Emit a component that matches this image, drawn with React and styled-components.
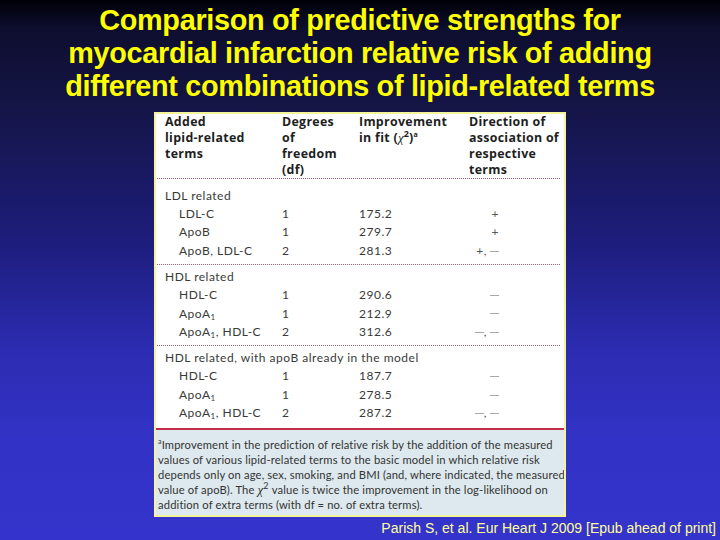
import styled, { createGlobalStyle } from 'styled-components';

const GlobalStyle = createGlobalStyle`
  html, body {
    margin: 0;
    padding: 0;
  }
  body {
    width: 720px;
    height: 540px;
    overflow: hidden;
    background: linear-gradient(
      to bottom,
      #000008 0px,
      #0e0e30 30px,
      #141444 100px,
      #1e1e80 250px,
      #2c2cb2 350px,
      #3232c6 440px,
      #3434cc 540px
    );
  }
`;

const groups = [
  {
    label: 'LDL related',
    rows: [
      ['LDL-C', '1', '175.2', '+'],
      ['ApoB', '1', '279.7', '+'],
      ['ApoB, LDL-C', '2', '281.3', '+,-'],
    ],
  },
  {
    label: 'HDL related',
    rows: [
      ['HDL-C', '1', '290.6', '-'],
      [['ApoA', '1'], '1', '212.9', '-'],
      [['ApoA', '1', ', HDL-C'], '2', '312.6', '-,-'],
    ],
  },
  {
    label: 'HDL related, with apoB already in the model',
    rows: [
      ['HDL-C', '1', '187.7', '-'],
      [['ApoA', '1'], '1', '278.5', '-'],
      [['ApoA', '1', ', HDL-C'], '2', '287.2', '-,-'],
    ],
  },
];

function Term({ value }) {
  if (typeof value === 'string') return value;
  return (
    <>
      {value[0]}
      <Sub>{value[1]}</Sub>
      {value[2]}
    </>
  );
}

// '+' plus sign, '-' minus dash, ',' separator
function Direction({ value }) {
  return value.split('').map((ch, i) => {
    if (ch === '-') return <Dash key={i} />;
    if (ch === ',') return <Comma key={i}>,</Comma>;
    return <Plus key={i}>+</Plus>;
  });
}

export default function App() {
  return (
    <>
      <GlobalStyle />
      <Page>
        <Title>
          Comparison of predictive strengths for
          <br />
          myocardial infarction relative risk of adding
          <br />
          different combinations of lipid-related terms
        </Title>

        <Panel>
          <Header>
            <HeadCell>
              Added
              <br />
              lipid-related
              <br />
              terms
            </HeadCell>
            <HeadCell>
              Degrees
              <br />
              of
              <br />
              freedom
              <br />
              (df)
            </HeadCell>
            <HeadCell>
              Improvement
              <br />
              in fit (<Chi>χ</Chi>
              <Sup2>2</Sup2>)<Sup>a</Sup>
            </HeadCell>
            <HeadCell>
              Direction of
              <br />
              association of
              <br />
              respective
              <br />
              terms
            </HeadCell>
          </Header>

          {groups.map((group, gi) => (
            <Group key={group.label} last={gi === groups.length - 1} first={gi === 0}>
              <SectionLabel>{group.label}</SectionLabel>
              {group.rows.map((row, ri) => (
                <Row key={ri}>
                  <TermCell>
                    <Term value={row[0]} />
                  </TermCell>
                  <Cell>{row[1]}</Cell>
                  <Cell>{row[2]}</Cell>
                  <DirCell>
                    <Direction value={row[3]} />
                  </DirCell>
                </Row>
              ))}
            </Group>
          ))}

          <Footnote>
            <Sup>a</Sup>Improvement in the prediction of relative risk by the addition of the measured
            <br />
            values of various lipid-related terms to the basic model in which relative risk
            <br />
            depends only on age, sex, smoking, and BMI (and, where indicated, the measured
            <br />
            value of apoB). The <Chi>χ</Chi>
            <Sup2>2</Sup2> value is twice the improvement in the log-likelihood on
            <br />
            addition of extra terms (with df = no. of extra terms).
          </Footnote>
        </Panel>

        <Citation>Parish S, et al. Eur Heart J 2009 [Epub ahead of print]</Citation>
      </Page>
    </>
  );
}

const Page = styled.div`
  width: 720px;
  height: 540px;
  display: flex;
  flex-direction: column;
  align-items: center;
  box-sizing: border-box;
  padding-top: 4px;
`;

const Title = styled.h1`
  margin: 0;
  font-family: 'Liberation Sans', Arial, sans-serif;
  font-weight: bold;
  font-size: 28.8px;
  line-height: 33px;
  color: #ffff00;
  text-align: center;
  letter-spacing: -0.3px;
`;

const Panel = styled.div`
  margin-top: 9px;
  width: 408px;
  height: 401px;
  background: #ffffff;
  border: 2px solid #f4f49a;
  display: flex;
  flex-direction: column;
  font-family: Lato, 'Open Sans', sans-serif;
  color: #333;
  overflow: hidden;
`;

const columns = '117px 77px 110px 1fr';

const Header = styled.div`
  display: grid;
  grid-template-columns: ${columns};
  padding: 0 8px;
  margin: 0 4px 0 1px;
  border-bottom: 1px dotted #d5506a;
`;

const HeadCell = styled.div`
  font-family: 'Open Sans', Lato, sans-serif;
  font-size: 12.4px;
  font-weight: bold;
  line-height: 16px;
  color: #1e1e1e;
  letter-spacing: 0.3px;
  white-space: nowrap;
`;

const Chi = styled.i`
  font-family: 'Liberation Serif', serif;
  font-weight: normal;
  font-size: 13px;
  letter-spacing: 0;
`;

const Sup = styled.sup`
  font-size: 7px;
  vertical-align: 5px;
  line-height: 0;
`;

const Sup2 = styled.sup`
  font-size: 9px;
  vertical-align: 5px;
  line-height: 0;
`;

const Sub = styled.sub`
  font-size: 8px;
  vertical-align: -2px;
  line-height: 0;
`;

const Group = styled.div`
  padding: ${({ first }) => (first ? '8px' : '3px')} 0 ${({ last }) => (last ? '5px' : '4px')};
  margin: 0 4px 0 1px;
  border-bottom: ${({ last }) => (last ? 'none' : '1px dotted #d5506a')};
`;

const SectionLabel = styled.div`
  padding-left: 8px;
  font-size: 12px;
  line-height: 18px;
  letter-spacing: 0.5px;
  color: #3a3a3a;
`;

const Row = styled.div`
  display: grid;
  grid-template-columns: ${columns};
  padding: 0 8px;
  font-size: 12px;
  line-height: 18.4px;
  letter-spacing: 0.5px;
  color: #3a3a3a;
`;

const Cell = styled.div``;

const TermCell = styled.div`
  padding-left: 14px;
  white-space: nowrap;
`;

const DirCell = styled.div`
  display: flex;
  justify-content: flex-end;
  align-items: center;
  padding-right: 53px;
`;

const Plus = styled.span`
  color: #555;
`;

const Comma = styled.span`
  color: #555;
  margin-right: 2px;
`;

const Dash = styled.span`
  display: inline-block;
  width: 9px;
  height: 1px;
  margin-left: 1px;
  background: #a8a8a8;
`;

const Footnote = styled.div`
  flex: 1;
  border-top: 2px solid #c42c4c;
  background: #dde9ee;
  padding: 7px 0 0 2px;
  font-size: 11.2px;
  line-height: 15px;
  letter-spacing: 0.15px;
  white-space: nowrap;
  color: #333;
`;

const Citation = styled.div`
  align-self: flex-end;
  margin-top: 3px;
  margin-right: 4px;
  font-family: 'Liberation Sans', Arial, sans-serif;
  font-size: 14px;
  color: #ffff99;
`;
